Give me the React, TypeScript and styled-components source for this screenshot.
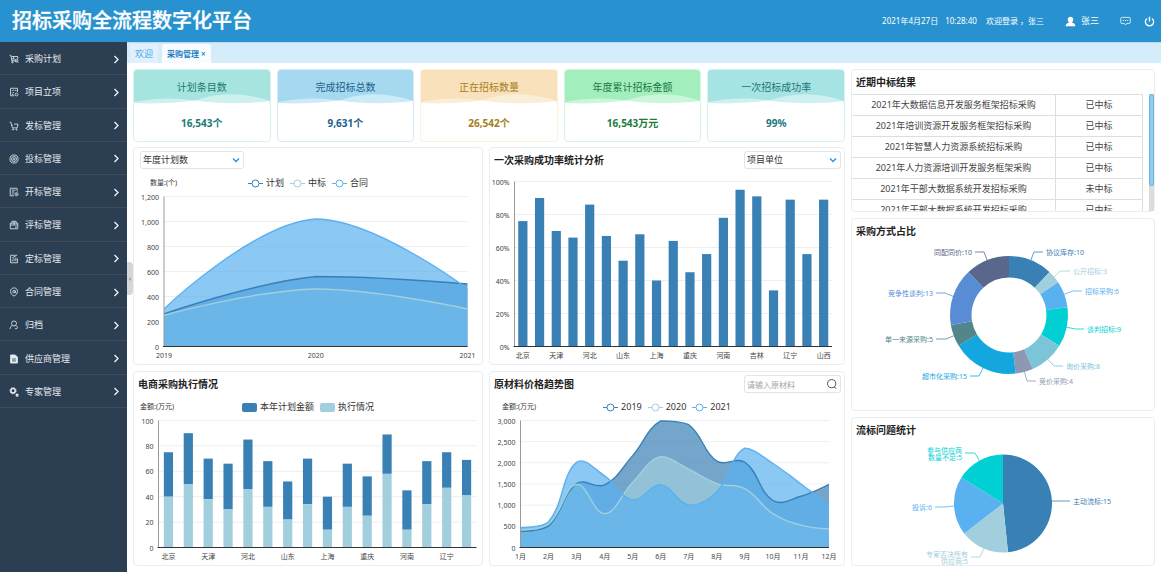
import React from 'react';
import styled, { createGlobalStyle } from 'styled-components';

type Point = [number, number];

const color = {
  header: '#2892d0',
  side: '#2c3e52',
  sideLine: '#434b55',
  tabs: '#d5ecfa',
  border: '#ebeef0',
  text: '#333333',
  accent: '#2196f3',
  blue: '#3980b5',
  pale: '#a1cfdd',
  sky: '#5ab1ef',
};

const GlobalStyle = createGlobalStyle`
  * { box-sizing: border-box; }
  body {
    margin: 0;
    background: #ffffff;
    color: ${color.text};
    font-family: "Noto Sans", "Noto Sans CJK SC", sans-serif;
    font-size: 9px;
    line-height: 12px;
  }
  h1, h2, p, ul { margin: 0; padding: 0; }
  button, select, input { font: inherit; color: inherit; }
`;

/* ---------- page frame ---------- */

const Page = styled.div`
  display: flex;
  flex-direction: column;
  min-height: 100vh;
`;

const Header = styled.header`
  display: flex;
  align-items: center;
  justify-content: space-between;
  height: 42px;
  padding: 0 6px 0 12px;
  background: ${color.header};
  color: #ffffff;
`;

const Brand = styled.h1`
  font-size: 20px;
  line-height: 28px;
  font-weight: 500;
  -webkit-text-stroke: 0.3px #ffffff;
`;

const HeaderInfo = styled.div`
  display: flex;
  align-items: center;
  font-size: 8px;
  white-space: nowrap;
`;

const Clock = styled.time`
  display: flex;
  gap: 7px;
  margin-right: 9px;
`;

const Welcome = styled.span`
  margin-right: 21px;
`;

const HeaderButton = styled.button<{ $gap?: number }>`
  display: flex;
  align-items: center;
  gap: 5px;
  margin: 0 0 0 ${(p) => p.$gap ?? 0}px;
  padding: 0;
  border: 0;
  background: none;
  font-size: 9px;
  cursor: pointer;
`;

const Body = styled.div`
  display: flex;
  flex: 1;
`;

const Sidebar = styled.nav`
  position: relative;
  flex: 0 0 127px;
  background: ${color.side};
  color: #e6ebf0;
`;

const Menu = styled.ul`
  display: grid;
  grid-auto-rows: 1fr;
  height: 366px;
  list-style: none;
`;

const MenuItem = styled.li`
  display: flex;
  border-bottom: 1px solid ${color.sideLine};
`;

const MenuLink = styled.a`
  display: flex;
  flex: 1;
  align-items: center;
  padding: 2px 7px 0 9px;
  color: inherit;
  text-decoration: none;
`;

const MenuLabel = styled.span`
  flex: 1;
  padding-left: 6px;
`;

const CollapseHandle = styled.button`
  position: absolute;
  top: 220px;
  right: -6px;
  width: 6px;
  height: 33px;
  padding: 0;
  border: 0;
  border-radius: 0 4px 4px 0;
  background: #d6d6d6;
  color: #555555;
  font-size: 7px;
  line-height: 33px;
`;

const Main = styled.main`
  flex: 1;
  min-width: 0;
`;

const TabBar = styled.div`
  display: flex;
  align-items: flex-end;
  gap: 4px;
  height: 21px;
  padding-left: 3px;
  border-top: 1px solid #b9dcf2;
  background: ${color.tabs};
`;

const Tab = styled.button<{ $active?: boolean }>`
  height: 19px;
  padding: 0 5px;
  border: 0;
  border-radius: 3px 3px 0 0;
  background: ${(p) => (p.$active ? '#f8fcff' : '#e1f0fc')};
  color: ${(p) => (p.$active ? '#1b7fc4' : '#47a7ec')};
  font-weight: ${(p) => (p.$active ? 600 : 400)};
  font-size: ${(p) => (p.$active ? 8 : 9)}px;
  white-space: nowrap;
`;

const Dashboard = styled.div`
  display: grid;
  grid-template-columns: minmax(0, 1fr) 304px;
  align-items: start;
  gap: 6px;
  padding: 6px;
`;

const Column = styled.div`
  display: grid;
  gap: 6px;
  min-width: 0;
`;

const LeftColumn = styled(Column)`
  gap: 5px;
`;

const KpiRow = styled.div`
  display: grid;
  grid-template-columns: repeat(5, minmax(0, 1fr));
  gap: 6px;
`;

const ChartGrid = styled.div`
  display: grid;
  grid-template-columns: minmax(0, 350fr) minmax(0, 356fr);
  gap: 6px;
`;

/* ---------- cards ---------- */

const KpiCard = styled.section<{ $tone: string; $edge: string; $ink: string }>`
  overflow: hidden;
  border: 1px solid ${(p) => p.$edge};
  border-radius: 4px;
  color: ${(p) => p.$ink};
  text-align: center;
  font-size: 10px;

  > div {
    background: ${(p) => p.$tone};
  }
`;

const KpiTitle = styled.h2`
  height: 24px;
  padding-top: 10px;
  font-size: 10px;
  line-height: 14px;
  font-weight: 400;
`;

const Wave = styled.svg`
  display: block;
  width: 100%;
  height: 10px;
`;

const KpiValue = styled.p`
  height: 37px;
  line-height: 39px;
  font-weight: 700;
`;

const Card = styled.section`
  min-width: 0;
  border: 1px solid ${color.border};
  border-radius: 4px;
  background: #ffffff;
`;

const CardHead = styled.div<{ $side?: number }>`
  display: flex;
  align-items: center;
  justify-content: space-between;
  height: 24px;
  padding: 0 3px 0 ${(p) => p.$side ?? 4}px;
`;

const CardTitle = styled.h2`
  font-size: 10px;
  line-height: 14px;
  font-weight: 600;
  color: #222222;
`;

const Field = styled.label<{ $width: number }>`
  display: flex;
  align-items: center;
  width: ${(p) => p.$width}px;
  height: 18px;
  padding-right: 3px;
  border: 1px solid #e2e5e8;
  border-radius: 3px;
  color: ${color.text};
`;

const Select = styled.select`
  flex: 1;
  min-width: 0;
  height: 16px;
  padding: 0 0 0 2px;
  border: 0;
  outline: 0;
  appearance: none;
  background: none;
`;

const SearchInput = styled.input`
  flex: 1;
  min-width: 0;
  height: 16px;
  padding: 0 0 0 2px;
  border: 0;
  outline: 0;
  background: none;
  font-size: 8px;

  &::placeholder {
    color: #a5a5a5;
  }
`;

const LegendRow = styled.div<{ $indent: number }>`
  display: grid;
  grid-template-columns: 1fr auto 1fr;
  align-items: center;
  height: 20px;
  padding-top: 2px;

  > span {
    padding-left: ${(p) => p.$indent}px;
    font-size: 7px;
  }
`;

const LegendList = styled.ul`
  display: flex;
  gap: 6px;
  list-style: none;

  li {
    display: flex;
    align-items: center;
    gap: 3px;
  }
`;

const Chart = styled.svg`
  display: block;
  width: 100%;
  height: auto;
  overflow: visible;
  font-size: 7px;

  text {
    fill: #444444;
  }
`;

const PieLabel = styled.text<{ $ink: string }>`
  && {
    fill: ${(p) => p.$ink};
  }
`;

const ScrollArea = styled.div`
  display: flex;
  justify-content: space-between;
  height: 117px;
  overflow: hidden;
`;

const ResultTable = styled.table`
  width: 291px;
  height: fit-content;
  border-collapse: separate;
  border-spacing: 0;
  table-layout: fixed;
  color: #444444;

  td {
    height: 21px;
    padding: 0;
    border-top: 1px solid #dedede;
    border-right: 1px solid #dedede;
    text-align: center;
    white-space: nowrap;
  }
  td:last-child {
    width: 87px;
  }
`;

const ScrollTrack = styled.div`
  width: 5px;
  background: #dcdcdc;
`;

const ScrollThumb = styled.div`
  height: 92px;
  border: 1px solid #6db6e2;
  border-radius: 2px;
  background: #93cbec;
`;

/* ---------- icons ---------- */

const Icon = ({ size = 10, children }: { size?: number; children: React.ReactNode }) => (
  <svg width={size} height={size} viewBox="0 0 16 16" fill="none" stroke="currentColor" strokeWidth="1.3" aria-hidden="true">
    {children}
  </svg>
);

const menu: { label: string; icon: React.ReactNode }[] = [
  {
    label: '采购计划',
    icon: <><path d="M1 2h2l1.500 9h9M4 4h10v4M4.500 8h5M7 4v4" /><circle cx="5.500" cy="13" r="1.200" /><circle cx="12" cy="10.500" r="2.200" /><path d="M13.500 12l1.500 2" /></>,
  },
  {
    label: '项目立项',
    icon: <><path d="M13.500 8V2h-11v12h6M5 5l1 1 1.500-2M9 5.500h3M5 9l1 1 1.500-2M5 12h2" /><circle cx="12" cy="12" r="2.200" /></>,
  },
  {
    label: '发标管理',
    icon: <><path d="M1 2h2l2.500 9h7.500l1.500-6H8M4 5l1 3" /><circle cx="6.500" cy="13.500" r="1" /><circle cx="12" cy="13.500" r="1" /></>,
  },
  {
    label: '投标管理',
    icon: <><circle cx="8" cy="8" r="6.500" /><circle cx="8" cy="8" r="4" /><circle cx="8" cy="8" r="1.500" /></>,
  },
  {
    label: '开标管理',
    icon: <><path d="M13 7V2H2v12h6M4.500 5h6M4.500 8h4M4.500 11h3" /><circle cx="12" cy="11.500" r="2.500" /><path d="M12 10.500v1.500h1" /></>,
  },
  {
    label: '评标管理',
    icon: <><path d="M2 5h12v9H2zM4 5l1-3h6l1 3M2 8h12M8 2v6M9.500 11.500h3" /></>,
  },
  {
    label: '定标管理',
    icon: <><path d="M13.500 7v7h-11V2h8M5 11.500V9M8 11.500V7M11 11.500V5.500M5 6.500l3-2 5-3" /></>,
  },
  {
    label: '合同管理',
    icon: <><path d="M8 1.500c3 0 5.500 1.500 5.500 5.500S11 13 8 14.500C5 13 2.500 11 2.500 7S5 1.500 8 1.500z" /><circle cx="8" cy="7.500" r="2" /><path d="M10 5.500v3l1.500.5" /></>,
  },
  {
    label: '归档',
    icon: <><circle cx="8" cy="5.500" r="4" /><path d="M5.500 9C3 10 2 12 1.500 14.500M10.500 9c1.500.5 2 1 2.500 2M9.500 13l1.500 1.500 3.500-3" /></>,
  },
  {
    label: '供应商管理',
    icon: <><path d="M2.500 1.500h7.500l3.500 3.500v9.500h-11z" fill="currentColor" /><path d="M5 8h6M5 11h6" stroke={color.side} /></>,
  },
  {
    label: '专家管理',
    icon: <><circle cx="6.500" cy="6" r="3.500" strokeWidth="2.400" /><circle cx="6.500" cy="6" r="5" strokeWidth="1.500" strokeDasharray="2 1.930" /><circle cx="13" cy="13" r="1.500" strokeWidth="2" /></>,
  },
];

const ArrowRight = () => (
  <svg width="7" height="9" viewBox="0 0 7 9" fill="none" stroke="#f2f5f7" strokeWidth="1.3" aria-hidden="true">
    <path d="M1.500 1l3.500 3.500L1.500 8" />
  </svg>
);

const ArrowDown = () => (
  <svg width="8" height="6" viewBox="0 0 8 6" fill="none" stroke={color.accent} strokeWidth="1.4" aria-hidden="true">
    <path d="M1 1.500l3 3 3-3" />
  </svg>
);

const LineMark = ({ tint }: { tint: string }) => (
  <svg width="15" height="9" viewBox="0 0 15 9" fill="#ffffff" stroke={tint} aria-hidden="true">
    <path d="M0 4.500h15" />
    <circle cx="7.500" cy="4.500" r="3.500" />
  </svg>
);

const BlockMark = ({ tint }: { tint: string }) => (
  <svg width="15" height="9" viewBox="0 0 15 9" fill={tint} aria-hidden="true">
    <rect width="15" height="9" rx="2" />
  </svg>
);

/* ---------- charts ---------- */

interface Plot {
  width: number;
  height: number;
  left: number;
  right: number;
  top: number;
  bottom: number;
}

const Frame = ({ plot, max, step, format, label, children }: {
  plot: Plot;
  max: number;
  step: number;
  format: (v: number) => string;
  label: string;
  children: React.ReactNode;
}) => {
  const ticks = Array.from({ length: max / step + 1 }, (_, i) => i * step);
  const y = (v: number) => plot.bottom - (v / max) * (plot.bottom - plot.top);
  return (
    <Chart viewBox={`0 0 ${plot.width} ${plot.height}`} role="img" aria-label={label}>
      {ticks.map((t) => (
        <g key={t}>
          <path d={`M${plot.left} ${y(t)}H${plot.right}`} stroke="#eeeeee" />
          <text x={plot.left - 5} y={y(t) + 3} textAnchor="end">{format(t)}</text>
        </g>
      ))}
      {children}
      <path d={`M${plot.left} ${plot.top}V${plot.bottom}`} stroke="#999999" />
      <path d={`M${plot.left - 1} ${plot.bottom}H${plot.right}`} stroke="#333333" />
    </Chart>
  );
};

const SMOOTH = 0.4;

/* Smooth curve through the points; control points stay within the range of the series. */
const curve = (pts: Point[]) => {
  const ys = pts.map((p) => p[1]);
  const lo = Math.min(...ys);
  const hi = Math.max(...ys);
  const clamp = (v: number) => Math.max(lo, Math.min(hi, v));
  let d = `M${pts[0][0]} ${pts[0][1]}`;
  let out = pts[0];
  for (let i = 1; i < pts.length; i += 1) {
    const p = pts[i];
    const prev = pts[i - 1];
    const next = pts[i + 1];
    let into: Point = p;
    let nextOut: Point = p;
    if (next) {
      const a = Math.hypot(p[0] - prev[0], p[1] - prev[1]);
      const b = Math.hypot(next[0] - p[0], next[1] - p[1]);
      const r = b / (a + b);
      const vx = next[0] - prev[0];
      const vy = next[1] - prev[1];
      into = [p[0] - vx * SMOOTH * (1 - r), clamp(p[1] - vy * SMOOTH * (1 - r))];
      nextOut = [p[0] + vx * SMOOTH * r, clamp(p[1] + vy * SMOOTH * r)];
    }
    d += `C${out[0]} ${out[1]} ${into[0]} ${into[1]} ${p[0]} ${p[1]}`;
    out = nextOut;
  }
  return d;
};

const AreaChart = ({ plot, max, step, labels, series, label }: {
  plot: Plot;
  max: number;
  step: number;
  labels: string[];
  series: { tint: string; values: number[] }[];
  label: string;
}) => {
  const x = (i: number) => plot.left + (i * (plot.right - plot.left)) / (labels.length - 1);
  const y = (v: number) => plot.bottom - (v / max) * (plot.bottom - plot.top);
  const lines = series.map((s) => ({ tint: s.tint, d: curve(s.values.map((v, i): Point => [x(i), y(v)])) }));
  return (
    <Frame plot={plot} max={max} step={step} label={label} format={(v) => v.toLocaleString('en-US')}>
      {lines.map((l) => (
        <path key={l.tint} d={`${l.d}V${plot.bottom}H${plot.left}Z`} fill={l.tint} fillOpacity="0.7" />
      ))}
      {lines.map((l) => (
        <path key={l.tint} d={l.d} fill="none" stroke={l.tint} strokeWidth="1.4" />
      ))}
      {labels.map((t, i) => (
        <text key={t} x={x(i)} y={plot.bottom + 11} textAnchor="middle">{t}</text>
      ))}
    </Frame>
  );
};

const BarChart = ({ plot, max, step, labels, values, lower, label, format }: {
  plot: Plot;
  max: number;
  step: number;
  labels: string[];
  values: number[];
  lower?: number[];
  label: string;
  format: (v: number) => string;
}) => {
  const band = (plot.right - plot.left) / values.length;
  const h = (v: number) => (v / max) * (plot.bottom - plot.top);
  const x = (i: number) => plot.left + band * (i + 0.5);
  return (
    <Frame plot={plot} max={max} step={step} label={label} format={format}>
      {values.map((v, i) => (
        <rect key={i} x={x(i) - 4.6} y={plot.bottom - h(v)} width="9.200" height={h(v) - h(lower?.[i] ?? 0)} fill={color.blue} />
      ))}
      {lower?.map((v, i) => (
        <rect key={i} x={x(i) - 4.6} y={plot.bottom - h(v)} width="9.200" height={h(v)} fill={color.pale} />
      ))}
      {labels.map((t, i) => (
        <text key={t} x={x(i * 2)} y={plot.bottom + 11} textAnchor="middle">{t}</text>
      ))}
    </Frame>
  );
};

interface Slice {
  name: string[];
  value: number;
  tint: string;
  elbow: Point;
  reach: number;
}

const PieChart = ({ width, height, cx, cy, outer, inner, slices, label }: {
  width: number;
  height: number;
  cx: number;
  cy: number;
  outer: number;
  inner: number;
  slices: Slice[];
  label: string;
}) => {
  const total = slices.reduce((sum, s) => sum + s.value, 0);
  const at = (share: number, r: number) => {
    const a = share * Math.PI * 2;
    return `${cx + r * Math.sin(a)} ${cy - r * Math.cos(a)}`;
  };
  let acc = 0;
  return (
    <Chart viewBox={`0 0 ${width} ${height}`} role="img" aria-label={label}>
      {slices.map((s) => {
        const from = acc / total;
        acc += s.value;
        const to = acc / total;
        const big = to - from > 0.5 ? 1 : 0;
        const right = s.elbow[0] > cx;
        const first = s.elbow[1] + 3 - (s.name.length - 1) * 3;
        return (
          <g key={s.name[0]}>
            <path
              d={`M${at(from, outer)}A${outer} ${outer} 0 ${big} 1 ${at(to, outer)}L${at(to, inner)}A${inner} ${inner} 0 ${big} 0 ${at(from, inner)}Z`}
              fill={s.tint}
            />
            <path d={`M${at((from + to) / 2, outer)}L${s.elbow[0]} ${s.elbow[1]}H${s.reach}`} fill="none" stroke={s.tint} strokeWidth="0.8" />
            {s.name.map((line, i) => (
              <PieLabel
                key={line}
                $ink={s.tint}
                x={s.reach + (right ? 3 : -3)}
                y={first + i * 7}
                textAnchor={right ? 'start' : 'end'}
              >
                {i === s.name.length - 1 ? `${line}:${s.value}` : line}
              </PieLabel>
            ))}
          </g>
        );
      })}
    </Chart>
  );
};

/* ---------- data ---------- */

const kpis = [
  { title: '计划条目数', value: '16,543个', tone: '#a6e4e0', edge: '#d5f3f0', ink: '#1c7a74' },
  { title: '完成招标总数', value: '9,631个', tone: '#a5d9f0', edge: '#d6ebf8', ink: '#22608c' },
  { title: '正在招标数量', value: '26,542个', tone: '#f8e1bb', edge: '#fbf1dd', ink: '#a5801a' },
  { title: '年度累计招标金额', value: '16,543万元', tone: '#a2efbd', edge: '#d3f6df', ink: '#1b7a3e' },
  { title: '一次招标成功率', value: '99%', tone: '#a6e3e3', edge: '#d5f2f2', ink: '#20787a' },
];

const cities = ['北京', '天津', '河北', '山东', '上海', '重庆', '河南', '吉林', '辽宁', '山西'];
const shopCities = ['北京', '天津', '河北', '山东', '上海', '重庆', '河南', '辽宁'];
const months = Array.from({ length: 12 }, (_, i) => `${i + 1}月`);

const planSeries = [
  { name: '计划', tint: color.blue, values: [260, 560, 500] },
  { name: '中标', tint: color.pale, values: [250, 460, 300] },
  { name: '合同', tint: color.sky, values: [300, 1020, 460] },
];

const priceSeries = [
  { name: '2019', tint: color.blue, values: [380, 510, 1510, 1480, 2170, 2990, 2900, 2040, 2015, 1110, 1210, 1490] },
  { name: '2020', tint: color.pale, values: [410, 550, 1490, 800, 1540, 2150, 1850, 1510, 1390, 800, 530, 440] },
  { name: '2021', tint: color.sky, values: [465, 610, 2010, 1690, 1125, 1480, 1005, 1320, 2345, 1985, 1500, 1000] },
];

const results = [
  ['2021年大数据信息开发服务框架招标采购', '已中标'],
  ['2021年培训资源开发服务框架招标采购', '已中标'],
  ['2021年智慧人力资源系统招标采购', '已中标'],
  ['2021年人力资源培训开发服务框架采购', '已中标'],
  ['2021年干部大数据系统开发招标采购', '未中标'],
  ['2021年干部大数据系统开发招标采购', '已中标'],
];

const methods: Slice[] = [
  { name: ['协议库存'], value: 10, tint: '#3980b5', elbow: [182, 9], reach: 191 },
  { name: ['公开招标'], value: 3, tint: '#a1cfdd', elbow: [208, 28], reach: 218 },
  { name: ['招标采购'], value: 6, tint: '#5ab1ef', elbow: [221, 48], reach: 230 },
  { name: ['谈判招标'], value: 9, tint: '#00d0d4', elbow: [223, 86], reach: 232 },
  { name: ['询价采购'], value: 8, tint: '#7cc4d8', elbow: [202, 123], reach: 211 },
  { name: ['竞价采购'], value: 4, tint: '#8d98b3', elbow: [175, 138], reach: 184 },
  { name: ['超市化采购'], value: 15, tint: '#13a6df', elbow: [127, 133], reach: 118 },
  { name: ['单一来源采购'], value: 5, tint: '#52868b', elbow: [94, 96], reach: 84 },
  { name: ['竞争性谈判'], value: 13, tint: '#588dd5', elbow: [93, 50], reach: 84 },
  { name: ['同配同价'], value: 10, tint: '#59678c', elbow: [132, 9], reach: 123 },
];

const failures: Slice[] = [
  { name: ['主动流标'], value: 15, tint: '#3980b5', elbow: [209, 59], reach: 218 },
  { name: ['专家否决所有', '供应商'], value: 5, tint: '#a1cfdd', elbow: [128, 115], reach: 119 },
  { name: ['投诉'], value: 6, tint: '#5ab1ef', elbow: [93, 65], reach: 83 },
  { name: ['参与供应商', '数量不足'], value: 5, tint: '#00d0d4', elbow: [123, 11], reach: 113 },
];

const Legend = ({ unit, indent, items, block }: {
  unit: string;
  indent: number;
  items: { name: string; tint: string }[];
  block?: boolean;
}) => (
  <LegendRow $indent={indent}>
    <span>{unit}</span>
    <LegendList>
      {items.map((s) => (
        <li key={s.name}>
          {block ? <BlockMark tint={s.tint} /> : <LineMark tint={s.tint} />}
          {s.name}
        </li>
      ))}
    </LegendList>
  </LegendRow>
);

export default function App() {
  return (
    <Page>
      <GlobalStyle />
      <Header>
        <Brand>招标采购全流程数字化平台</Brand>
        <HeaderInfo>
          <Clock><span>2021年4月27日</span><span>10:28:40</span></Clock>
          <Welcome>欢迎登录 ，张三</Welcome>
          <HeaderButton type="button">
            <svg width="11" height="11" viewBox="0 0 16 16" fill="#ffffff" aria-hidden="true">
              <path d="M8 1c2.400 0 4 1.800 4 4.200 0 1.800-.8 3.300-2 4.100 2.800.7 5 2 5 5.700H1c0-3.700 2.200-5 5-5.700-1.200-.8-2-2.300-2-4.100C4 2.800 5.600 1 8 1z" />
            </svg>
            张三
          </HeaderButton>
          <HeaderButton type="button" $gap={21} aria-label="消息">
            <Icon size={11}>
              <path d="M3 2h10a2 2 0 0 1 2 2v5a2 2 0 0 1-2 2H9.500L8 13l-1.500-2H3a2 2 0 0 1-2-2V4a2 2 0 0 1 2-2z" strokeWidth="1.100" />
              <path d="M4 6.500h1.600M7.200 6.500h1.600M10.400 6.500H12" strokeWidth="1.600" />
            </Icon>
          </HeaderButton>
          <HeaderButton type="button" $gap={13} aria-label="退出">
            <Icon size={11}><path d="M8 1v7M4.500 3.500a6 6 0 1 0 7 0" strokeWidth="1.900" /></Icon>
          </HeaderButton>
        </HeaderInfo>
      </Header>
      <Body>
        <Sidebar>
          <Menu>
            {menu.map((m) => (
              <MenuItem key={m.label}>
                <MenuLink href="#">
                  <Icon>{m.icon}</Icon>
                  <MenuLabel>{m.label}</MenuLabel>
                  <ArrowRight />
                </MenuLink>
              </MenuItem>
            ))}
          </Menu>
          <CollapseHandle type="button" aria-label="收起菜单">‹</CollapseHandle>
        </Sidebar>
        <Main>
          <TabBar>
            <Tab type="button">欢迎</Tab>
            <Tab type="button" $active>采购管理 ×</Tab>
          </TabBar>
          <Dashboard>
            <LeftColumn>
              <KpiRow>
                {kpis.map((k) => (
                  <KpiCard key={k.title} $tone={k.tone} $edge={k.edge} $ink={k.ink}>
                    <div>
                      <KpiTitle>{k.title}</KpiTitle>
                      <Wave viewBox="0 0 137 10" preserveAspectRatio="none" fill="#ffffff" aria-hidden="true">
                        <path d="M0 8C25 3 45 4 62 6.500C85-2 112-2 137 7V10H0z" fillOpacity="0.45" />
                        <path d="M0 9C20 10 40 9 62 6.500C85 10 115 10 137 7V10H0z" />
                      </Wave>
                    </div>
                    <KpiValue>{k.value}</KpiValue>
                  </KpiCard>
                ))}
              </KpiRow>
              <ChartGrid>
                <Card>
                  <CardHead $side={6}>
                    <Field $width={104}>
                      <Select aria-label="统计指标"><option>年度计划数</option></Select>
                      <ArrowDown />
                    </Field>
                  </CardHead>
                  <Legend unit="数量:(个)" indent={16} items={planSeries} />
                  <AreaChart
                    plot={{ width: 348, height: 172, left: 30, right: 333.5, top: 4.5, bottom: 154.5 }}
                    max={1200}
                    step={200}
                    labels={['2019', '2020', '2021']}
                    series={planSeries}
                    label="年度计划数"
                  />
                </Card>
                <Card>
                  <CardHead>
                    <CardTitle>一次采购成功率统计分析</CardTitle>
                    <Field $width={97}>
                      <Select aria-label="项目单位"><option>项目单位</option></Select>
                      <ArrowDown />
                    </Field>
                  </CardHead>
                  <BarChart
                    plot={{ width: 354, height: 192, left: 24.5, right: 342, top: 9.5, bottom: 174.5 }}
                    max={100}
                    step={20}
                    labels={cities}
                    values={[76, 90, 70, 66, 86, 67, 52, 68, 40, 64, 45, 56, 78, 95, 91, 34, 89, 56, 89]}
                    format={(v) => `${v}%`}
                    label="一次采购成功率统计分析"
                  />
                </Card>
                <Card>
                  <CardHead>
                    <CardTitle>电商采购执行情况</CardTitle>
                  </CardHead>
                  <Legend
                    unit="金额:(万元)"
                    indent={6}
                    block
                    items={[{ name: '本年计划金额', tint: color.blue }, { name: '执行情况', tint: color.pale }]}
                  />
                  <BarChart
                    plot={{ width: 348, height: 149, left: 24.5, right: 342.5, top: 4.5, bottom: 131.5 }}
                    max={100}
                    step={20}
                    labels={shopCities}
                    values={[75, 90, 70, 66, 85, 68, 52, 70, 40, 66, 56, 89, 45, 68, 75, 69]}
                    lower={[40, 50, 38, 30, 46, 32, 22, 34, 14, 32, 25, 58, 14, 34, 47, 41]}
                    format={(v) => `${v}`}
                    label="电商采购执行情况"
                  />
                </Card>
                <Card>
                  <CardHead>
                    <CardTitle>原材料价格趋势图</CardTitle>
                    <Field $width={97}>
                      <SearchInput type="text" placeholder="请输入原材料" aria-label="原材料" />
                      <Icon><circle cx="7.500" cy="7.500" r="6.500" /><path d="M11 12l4 3.500" /></Icon>
                    </Field>
                  </CardHead>
                  <Legend unit="金额:(万元)" indent={12} items={priceSeries} />
                  <AreaChart
                    plot={{ width: 354, height: 149, left: 30.5, right: 339, top: 4.5, bottom: 131.5 }}
                    max={3000}
                    step={500}
                    labels={months}
                    series={priceSeries}
                    label="原材料价格趋势图"
                  />
                </Card>
              </ChartGrid>
            </LeftColumn>
            <Column>
              <Card>
                <CardHead><CardTitle>近期中标结果</CardTitle></CardHead>
                <ScrollArea>
                  <ResultTable>
                    <tbody>
                      {results.map(([name, state], i) => (
                        <tr key={i}>
                          <td>{name}</td>
                          <td>{state}</td>
                        </tr>
                      ))}
                    </tbody>
                  </ResultTable>
                  <ScrollTrack><ScrollThumb /></ScrollTrack>
                </ScrollArea>
              </Card>
              <Card>
                <CardHead><CardTitle>采购方式占比</CardTitle></CardHead>
                <PieChart width={302} height={167} cx={157} cy={72} outer={59} inner={37.5} slices={methods} label="采购方式占比" />
              </Card>
              <Card>
                <CardHead><CardTitle>流标问题统计</CardTitle></CardHead>
                <PieChart width={302} height={123} cx={151} cy={61.5} outer={49} inner={0} slices={failures} label="流标问题统计" />
              </Card>
            </Column>
          </Dashboard>
        </Main>
      </Body>
    </Page>
  );
}
